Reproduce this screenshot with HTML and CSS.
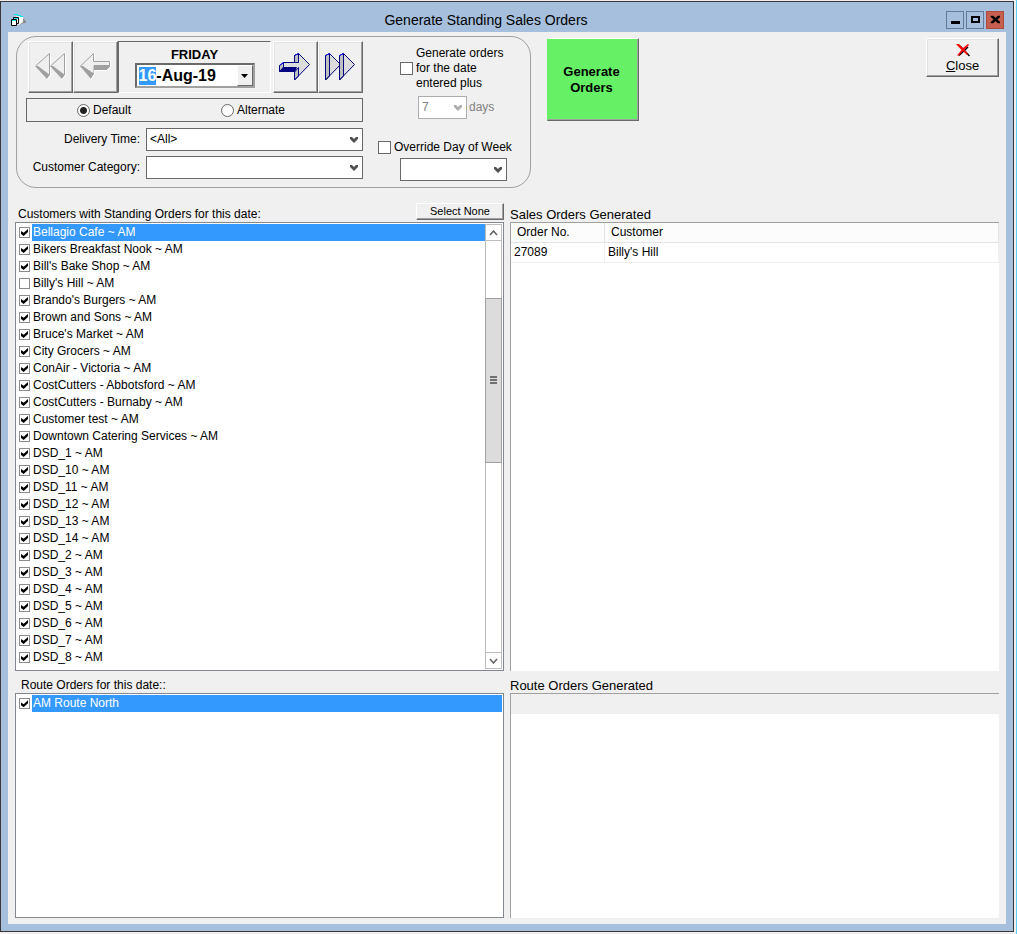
FILE: index.html
```html
<!DOCTYPE html>
<html lang="en">
<head>
<meta charset="utf-8">
<title>Generate Standing Sales Orders</title>
<link rel="stylesheet" href="styles.css">
</head>
<body>
<div class="window">
  <header class="titlebar">
    <svg class="app-icon" width="16" height="14" viewBox="0 0 16 14" aria-hidden="true">
      <path d="M6 3l7 1 1 4-6 4z" fill="#fff"/>
      <path d="M13 5l3 3v2h-2l-5 2V9l4-1z" fill="#8c8c8c"/><path d="M8 4l5 1v4l-4 3z" fill="#fff"/>
      <path d="M4 1.500h4M7 2.500h4M10 3.500h3" stroke="#00e5e5"/>
      <path d="M3.500 6V4.500h5v6H7" fill="#fff" stroke="#000"/>
      <path d="M1.500 6.500h5v6h-5z" fill="#fff" stroke="#000"/>
      <path d="M2 7.500h4M4 5.500h4" stroke="#00e5e5"/>
    </svg>
    <h1 class="title">Generate Standing Sales Orders</h1>
    <div class="window-buttons">
      <button class="win-btn" aria-label="Minimize"><svg width="10" height="10"><path d="M1 6h9v3H1z"/></svg></button>
      <button class="win-btn" aria-label="Maximize"><svg width="10" height="10"><path d="M1 1h9v7H1zM3 3v3h5V3z" fill-rule="evenodd"/></svg></button>
      <button class="win-btn win-close" aria-label="Close window"><svg width="10" height="10"><path d="M1 1h2l2.500 2L8 1h2v1L7 4.500 10 7v1H8L5.500 6 3 8H1V7l3-2.500L1 2z" stroke="#000" stroke-width=".5"/></svg></button>
    </div>
  </header>

  <main class="client">
    <div class="toolbar">
      <section class="options" aria-label="Order options">
        <div class="date-column">
          <div class="nav-row">
            <button class="nav-btn" aria-label="Back one week">
              <svg width="34" height="30" viewBox="0 0 34 30">
                <g id="back"><path d="M1.500 14L15.500 1.500V23" fill="#efefef" stroke="#a0a0a0"/><path d="M1 14h3l12 9-3 4z" fill="#a0a0a0"/><path d="M16.500 1v22L13 27.500" fill="none" stroke="#fff"/></g>
                <use href="#back" x="15"/>
              </svg>
            </button>
            <button class="nav-btn" aria-label="Back one day">
              <svg width="34" height="30" viewBox="0 0 34 30">
                <path d="M1.500 14L14.500 1.500V9.500H30.500V14H15V22z" fill="#efefef" stroke="#a0a0a0"/>
                <path d="M1 14h3l11 8-3 5zM15 13h16v2l-3 3H15z" fill="#a0a0a0"/>
                <path d="M15.500 1v8M31.500 9v6l-4 3.500H15.500V22L12 27.500" fill="none" stroke="#fff"/>
              </svg>
            </button>
            <div class="date-panel">
              <label class="weekday" for="order-date">FRIDAY</label>
              <div class="date-box">
                <input class="date-input" id="order-date" type="text" value="16-Aug-19">
                <button class="date-drop" aria-label="Open calendar"><svg width="7" height="4"><path d="M0 0h7L3.500 4z"/></svg></button>
              </div>
            </div>
            <button class="nav-btn" aria-label="Forward one day">
              <svg width="34" height="30" viewBox="0 0 34 30">
                <path d="M4.500 10.500H19.500V1.500L30.500 12.500 19.500 24V15.500H4.500z" fill="#dcdcdc"/>
                <path d="M.5 19.500V13.500L4.500 10.500V15.500z" fill="#c0c0c0" stroke="#000080"/>
                <path d="M15.500 10.500V3.500L19.500 1.500V10.500zM15.500 20V28L19.500 24V15.500z" fill="#c0c0c0" stroke="#000080"/>
                <path d="M4.500 10.500h15M19.500 1.500l11 11L15.500 28" fill="none" stroke="#000080"/>
                <path d="M4 15h14l-2 5H0z" fill="#000080"/>
                <path d="M15.500 3.500l4-2M.5 13.500l4-3" stroke="#0000ff"/>
              </svg>
            </button>
            <button class="nav-btn" aria-label="Forward one week">
              <svg width="34" height="30" viewBox="0 0 34 30">
                <g id="fwd"><path d="M5.500 1.500l11 11L5.500 24z" fill="#dcdcdc"/><path d="M1.500 28V3.500L5.500 1.500V24z" fill="#c0c0c0" stroke="#000080"/><path d="M5.500 1.500l11 11L1.500 28" fill="none" stroke="#000080"/><path d="M1.500 3.500l4-2" stroke="#0000ff"/></g>
                <use href="#fwd" x="14"/>
              </svg>
            </button>
          </div>
          <div class="schedule">
            <label class="radio"><input type="radio" name="schedule" checked>Default</label>
            <label class="radio"><input type="radio" name="schedule">Alternate</label>
          </div>
          <div class="field">
            <label for="delivery">Delivery Time:</label>
            <div class="combo"><select id="delivery"><option>&lt;All&gt;</option></select><svg class="arrow" width="8" height="6"><path d="M0 0h2l2 2 2-2h2v2L4 6 0 2z"/></svg></div>
          </div>
          <div class="field">
            <label for="category">Customer Category:</label>
            <div class="combo"><select id="category"><option></option></select><svg class="arrow" width="8" height="6"><path d="M0 0h2l2 2 2-2h2v2L4 6 0 2z"/></svg></div>
          </div>
        </div>
        <div class="extra-column">
          <label class="check plus"><input type="checkbox"><span>Generate orders<br>for the date<br>entered plus</span></label>
          <div class="days">
            <div class="combo disabled"><select id="days" disabled><option>7</option></select><svg class="arrow" width="8" height="6"><path d="M0 0h2l2 2 2-2h2v2L4 6 0 2z"/></svg></div>
            <label for="days">days</label>
          </div>
          <label class="check override"><input type="checkbox" id="override"><span>Override Day of Week</span></label>
          <div class="combo day-combo"><select aria-label="Day of week"><option></option></select><svg class="arrow" width="8" height="6"><path d="M0 0h2l2 2 2-2h2v2L4 6 0 2z"/></svg></div>
        </div>
      </section>
      <button class="generate">Generate<br>Orders</button>
      <button class="close">
        <svg width="14" height="14" viewBox="0 0 14 14" aria-hidden="true"><path d="M3 12.500L12 4M4 3l9.500 10" stroke="#000" stroke-width="1.500"/><path d="M0 1h3l4 4 5-4 1 1-4.500 4.500L12 11l-1 1-4-4-4 4.500H1L5.500 7z" fill="#f00"/></svg>
        <span><u>C</u>lose</span>
      </button>
    </div>

    <div class="lists">
      <div class="caption customers-caption"><h2>Customers with Standing Orders for this date:</h2><button class="select-none">Select None</button></div>
      <div class="caption"><h2 class="wide">Sales Orders Generated</h2></div>

      <div class="listbox">
        <ul class="items">
          <li class="selected"><label><input type="checkbox" checked><span>Bellagio Cafe ~ AM</span></label></li>
          <li><label><input type="checkbox" checked><span>Bikers Breakfast Nook ~ AM</span></label></li>
          <li><label><input type="checkbox" checked><span>Bill's Bake Shop ~ AM</span></label></li>
          <li><label><input type="checkbox"><span>Billy's Hill ~ AM</span></label></li>
          <li><label><input type="checkbox" checked><span>Brando's Burgers ~ AM</span></label></li>
          <li><label><input type="checkbox" checked><span>Brown and Sons ~ AM</span></label></li>
          <li><label><input type="checkbox" checked><span>Bruce's Market ~ AM</span></label></li>
          <li><label><input type="checkbox" checked><span>City Grocers ~ AM</span></label></li>
          <li><label><input type="checkbox" checked><span>ConAir - Victoria ~ AM</span></label></li>
          <li><label><input type="checkbox" checked><span>CostCutters - Abbotsford ~ AM</span></label></li>
          <li><label><input type="checkbox" checked><span>CostCutters - Burnaby ~ AM</span></label></li>
          <li><label><input type="checkbox" checked><span>Customer test ~ AM</span></label></li>
          <li><label><input type="checkbox" checked><span>Downtown Catering Services ~ AM</span></label></li>
          <li><label><input type="checkbox" checked><span>DSD_1 ~ AM</span></label></li>
          <li><label><input type="checkbox" checked><span>DSD_10 ~ AM</span></label></li>
          <li><label><input type="checkbox" checked><span>DSD_11 ~ AM</span></label></li>
          <li><label><input type="checkbox" checked><span>DSD_12 ~ AM</span></label></li>
          <li><label><input type="checkbox" checked><span>DSD_13 ~ AM</span></label></li>
          <li><label><input type="checkbox" checked><span>DSD_14 ~ AM</span></label></li>
          <li><label><input type="checkbox" checked><span>DSD_2 ~ AM</span></label></li>
          <li><label><input type="checkbox" checked><span>DSD_3 ~ AM</span></label></li>
          <li><label><input type="checkbox" checked><span>DSD_4 ~ AM</span></label></li>
          <li><label><input type="checkbox" checked><span>DSD_5 ~ AM</span></label></li>
          <li><label><input type="checkbox" checked><span>DSD_6 ~ AM</span></label></li>
          <li><label><input type="checkbox" checked><span>DSD_7 ~ AM</span></label></li>
          <li><label><input type="checkbox" checked><span>DSD_8 ~ AM</span></label></li>
        </ul>
        <div class="scrollbar">
          <button class="scroll-btn" aria-label="Scroll up"><svg width="9" height="6"><path d="M1 5l3.500-4L8 5" /></svg></button>
          <div class="track-above"></div>
          <div class="thumb"><i></i><i></i><i></i></div>
          <div class="track-below"></div>
          <button class="scroll-btn" aria-label="Scroll down"><svg width="9" height="6"><path d="M1 1l3.500 4L8 1" /></svg></button>
        </div>
      </div>
      <div class="grid-view">
        <table class="orders">
          <thead><tr><th class="order-no">Order No.</th><th>Customer</th></tr></thead>
          <tbody><tr><td>27089</td><td>Billy's Hill</td></tr></tbody>
        </table>
      </div>

      <div class="caption route-caption"><h2>Route Orders for this date::</h2></div>
      <div class="caption"><h2 class="wide">Route Orders Generated</h2></div>

      <div class="listbox">
        <ul class="items">
          <li class="selected"><label><input type="checkbox" checked><span>AM Route North</span></label></li>
        </ul>
      </div>
      <div class="grid-view"><div class="empty-head"></div></div>
    </div>
  </main>
</div>
<script src="script.js"></script>
</body>
</html>
```
FILE: styles.css
```css
* { box-sizing: border-box; }
body {
  margin: 0;
  min-height: 100vh;
  display: flex;
  padding: 1px 2px 2px 0;
  border-right: 1px solid #5ccdf5;
  background: #f0eeee;
  color: #000;
  font: 12px/15px "Liberation Sans", Arial, sans-serif;
}
button, input, select { font: inherit; color: inherit; margin: 0; padding: 0; border-radius: 0; }
button { display: flex; align-items: center; justify-content: center; }
h1, h2, ul { margin: 0; padding: 0; font-weight: normal; }
svg { display: block; }

.window {
  flex: 1;
  display: flex;
  flex-direction: column;
  border: 1px solid #383838;
  background: #a6bfdc;
  padding: 0 7px 7px;
}
.titlebar { display: flex; align-items: center; height: 30px; padding: 6px 2px 0; }
.app-icon { width: 16px; }
.title { flex: 1; text-align: center; font-size: 14px; line-height: 20px; }
.window-buttons { display: flex; gap: 2px; }
.win-btn { width: 18px; height: 18px; border: 1px solid #64799a; background: #a6bfdc; }
.win-close { background: #c75f50; border-color: #b04a3c; }

.client { flex: 1; display: flex; flex-direction: column; background: #f0f0f0; padding: 4px 7px 6px; }
.toolbar { display: flex; align-items: flex-start; padding: 0 0 14px 1px; }

.options {
  display: flex;
  gap: 15px;
  width: 515px;
  height: 152px;
  border: 1px solid #a0a0a0;
  border-radius: 20px;
  padding: 4px 8px 8px 9px;
}
.date-column { width: 337px; }
.nav-row { display: flex; padding-left: 2px; height: 52px; }
.nav-btn {
  width: 45px;
  border: 1px solid;
  border-color: #fff #696969 #696969 #fff;
  box-shadow: inset -1px -1px #a0a0a0, inset 1px 1px #e3e3e3;
  background: #f0f0f0;
}
.date-panel {
  flex: 1;
  display: flex;
  flex-direction: column;
  align-items: center;
  margin-right: 2px;
  border: 1px solid;
  border-color: #696969 #fff #fff #696969;
  padding-top: 4px;
}
.weekday { font-size: 13px; font-weight: bold; line-height: 17px; }
.date-box { display: flex; width: 120px; height: 25px; border: 2px solid; border-color: #696969 #a0a0a0 #a0a0a0 #696969; background: #fff; }
.date-input { flex: 1; min-width: 0; border: 0; outline: 0; padding-left: 2px; font-size: 16px; font-weight: bold; background: #fff; }
.date-input::selection { background: #3399ff; color: #fff; }
.date-drop { width: 16px; border: 1px solid; border-color: #fff #696969 #696969 #fff; background: #f0f0f0; }

.schedule { display: flex; gap: 3px; height: 24px; margin: 5px 0 6px; border: 1px solid #696969; padding-left: 50px; }
.radio { display: flex; align-items: center; gap: 3px; width: 143px; }
.radio input { appearance: none; width: 13px; height: 13px; border: 1px solid #696969; border-radius: 50%; background: #fff; }
.radio input:checked { background: radial-gradient(circle, #222 3px, #fff 4px); }

.field { display: flex; align-items: center; justify-content: flex-end; gap: 6px; margin-bottom: 5px; }
.combo { position: relative; width: 217px; height: 23px; }
.combo select { appearance: none; width: 100%; height: 100%; border: 1px solid #696969; background: #fff; padding-left: 3px; opacity: 1; }
.arrow { position: absolute; right: 5px; top: 9px; fill: #505050; pointer-events: none; }

.extra-column { display: flex; flex-direction: column; align-items: flex-start; padding-top: 5px; }
.check { display: flex; align-items: center; gap: 3px; white-space: nowrap; }
.check input { appearance: none; width: 13px; height: 13px; border: 1px solid #696969; background: #fff; }
.plus { padding-left: 22px; }
.days { display: flex; align-items: center; gap: 2px; margin: 5px 0 21px 40px; color: #808080; }
.days .combo { width: 49px; }
.disabled select { border-color: #adadad; color: #808080; }
.disabled .arrow { fill: #adadad; }
.day-combo { width: 107px; margin: 3px 0 0 22px; flex: none; }

.generate {
  width: 92px;
  height: 83px;
  margin: 2px 0 0 16px;
  padding-right: 3px;
  background: #66f066;
  border: 1px solid;
  border-color: #fff #696969 #696969 #66f066;
  box-shadow: inset -1px -1px #a0a0a0;
  font-size: 13px;
  font-weight: bold;
  line-height: 16px;
}
.close {
  flex-direction: column;
  gap: 1px;
  width: 73px;
  height: 39px;
  margin: 2px 0 0 auto;
  background: #f0f0f0;
  border: 1px solid;
  border-color: #fff #696969 #696969 #fff;
  box-shadow: inset -1px -1px #a0a0a0, inset 1px 1px #e3e3e3;
  font-size: 13px;
}

.lists { flex: 1; display: grid; grid-template: 20px 2fr 22px 1fr / 1fr 1fr; column-gap: 6px; }
.caption { display: flex; align-items: flex-end; }
.caption h2 { font-size: 12px; line-height: 15px; padding-left: 3px; }
.caption .wide { font-size: 13px; padding: 0; }
.customers-caption { justify-content: space-between; }
.route-caption h2 { padding-left: 6px; }
.select-none {
  width: 88px;
  height: 17px;
  margin-bottom: 2px;
  background: #f0f0f0;
  border: 1px solid;
  border-color: #fff #696969 #696969 #fff;
  box-shadow: inset -1px -1px #a0a0a0;
  font-size: 11px;
}

.listbox { display: flex; min-height: 0; border: 1px solid #828790; background: #fff; padding: 1px; }
.items { flex: 1; list-style: none; overflow: hidden; }
.items label { display: flex; align-items: center; height: 17px; padding-left: 2px; gap: 2px; }
.items input { appearance: none; flex: none; width: 11px; height: 11px; border: 1px solid #8c8c8c; background: #fff; position: relative; }
.items input:checked::after {
  content: "";
  position: absolute;
  inset: 1px;
  background: #000;
  clip-path: polygon(0 30%, 38% 55%, 100% 0, 100% 42%, 38% 100%, 0 72%);
}
.items span { flex: 1; padding-left: 1px; line-height: 17px; }
.selected span { background: #3399ff; color: #fff; }

.scrollbar { display: flex; flex-direction: column; width: 17px; border: 1px solid #bdbdbd; border-width: 0 1px; }
.scroll-btn { height: 17px; border: 1px solid #bdbdbd; border-width: 1px 0; background: #fff; }
.scroll-btn path { fill: none; stroke: #606060; stroke-width: 1.5; }
.track-above { flex: 57; }
.track-below { flex: 190; }
.thumb {
  flex: 164;
  display: flex;
  flex-direction: column;
  align-items: center;
  justify-content: center;
  gap: 1px;
  margin: 0 -1px;
  border: 1px solid #a0a0a0;
  background: #dcdcdc;
}
.thumb i { width: 7px; height: 2px; background: #707070; }

.grid-view { min-height: 0; border: 1px solid #a0a0a0; border-width: 1px 0 0 1px; background: #fff; }
.orders { width: 100%; border-collapse: separate; border-spacing: 0; table-layout: fixed; }
.orders th { height: 20px; padding: 0 0 0 6px; font-weight: normal; text-align: left; background: #fcfcfc; border: 1px solid #e3e3e3; border-width: 0 1px 1px 0; }
.orders td { height: 20px; padding: 0 0 0 3px; border: 1px solid #f0f0f0; border-width: 0 1px 1px 0; }
.order-no { width: 94px; }
.empty-head { height: 20px; background: #f0f0f0; }
```
FILE: script.js
```js
const dateInput = document.getElementById("order-date");
dateInput.focus();
dateInput.setSelectionRange(0, 2);
```
